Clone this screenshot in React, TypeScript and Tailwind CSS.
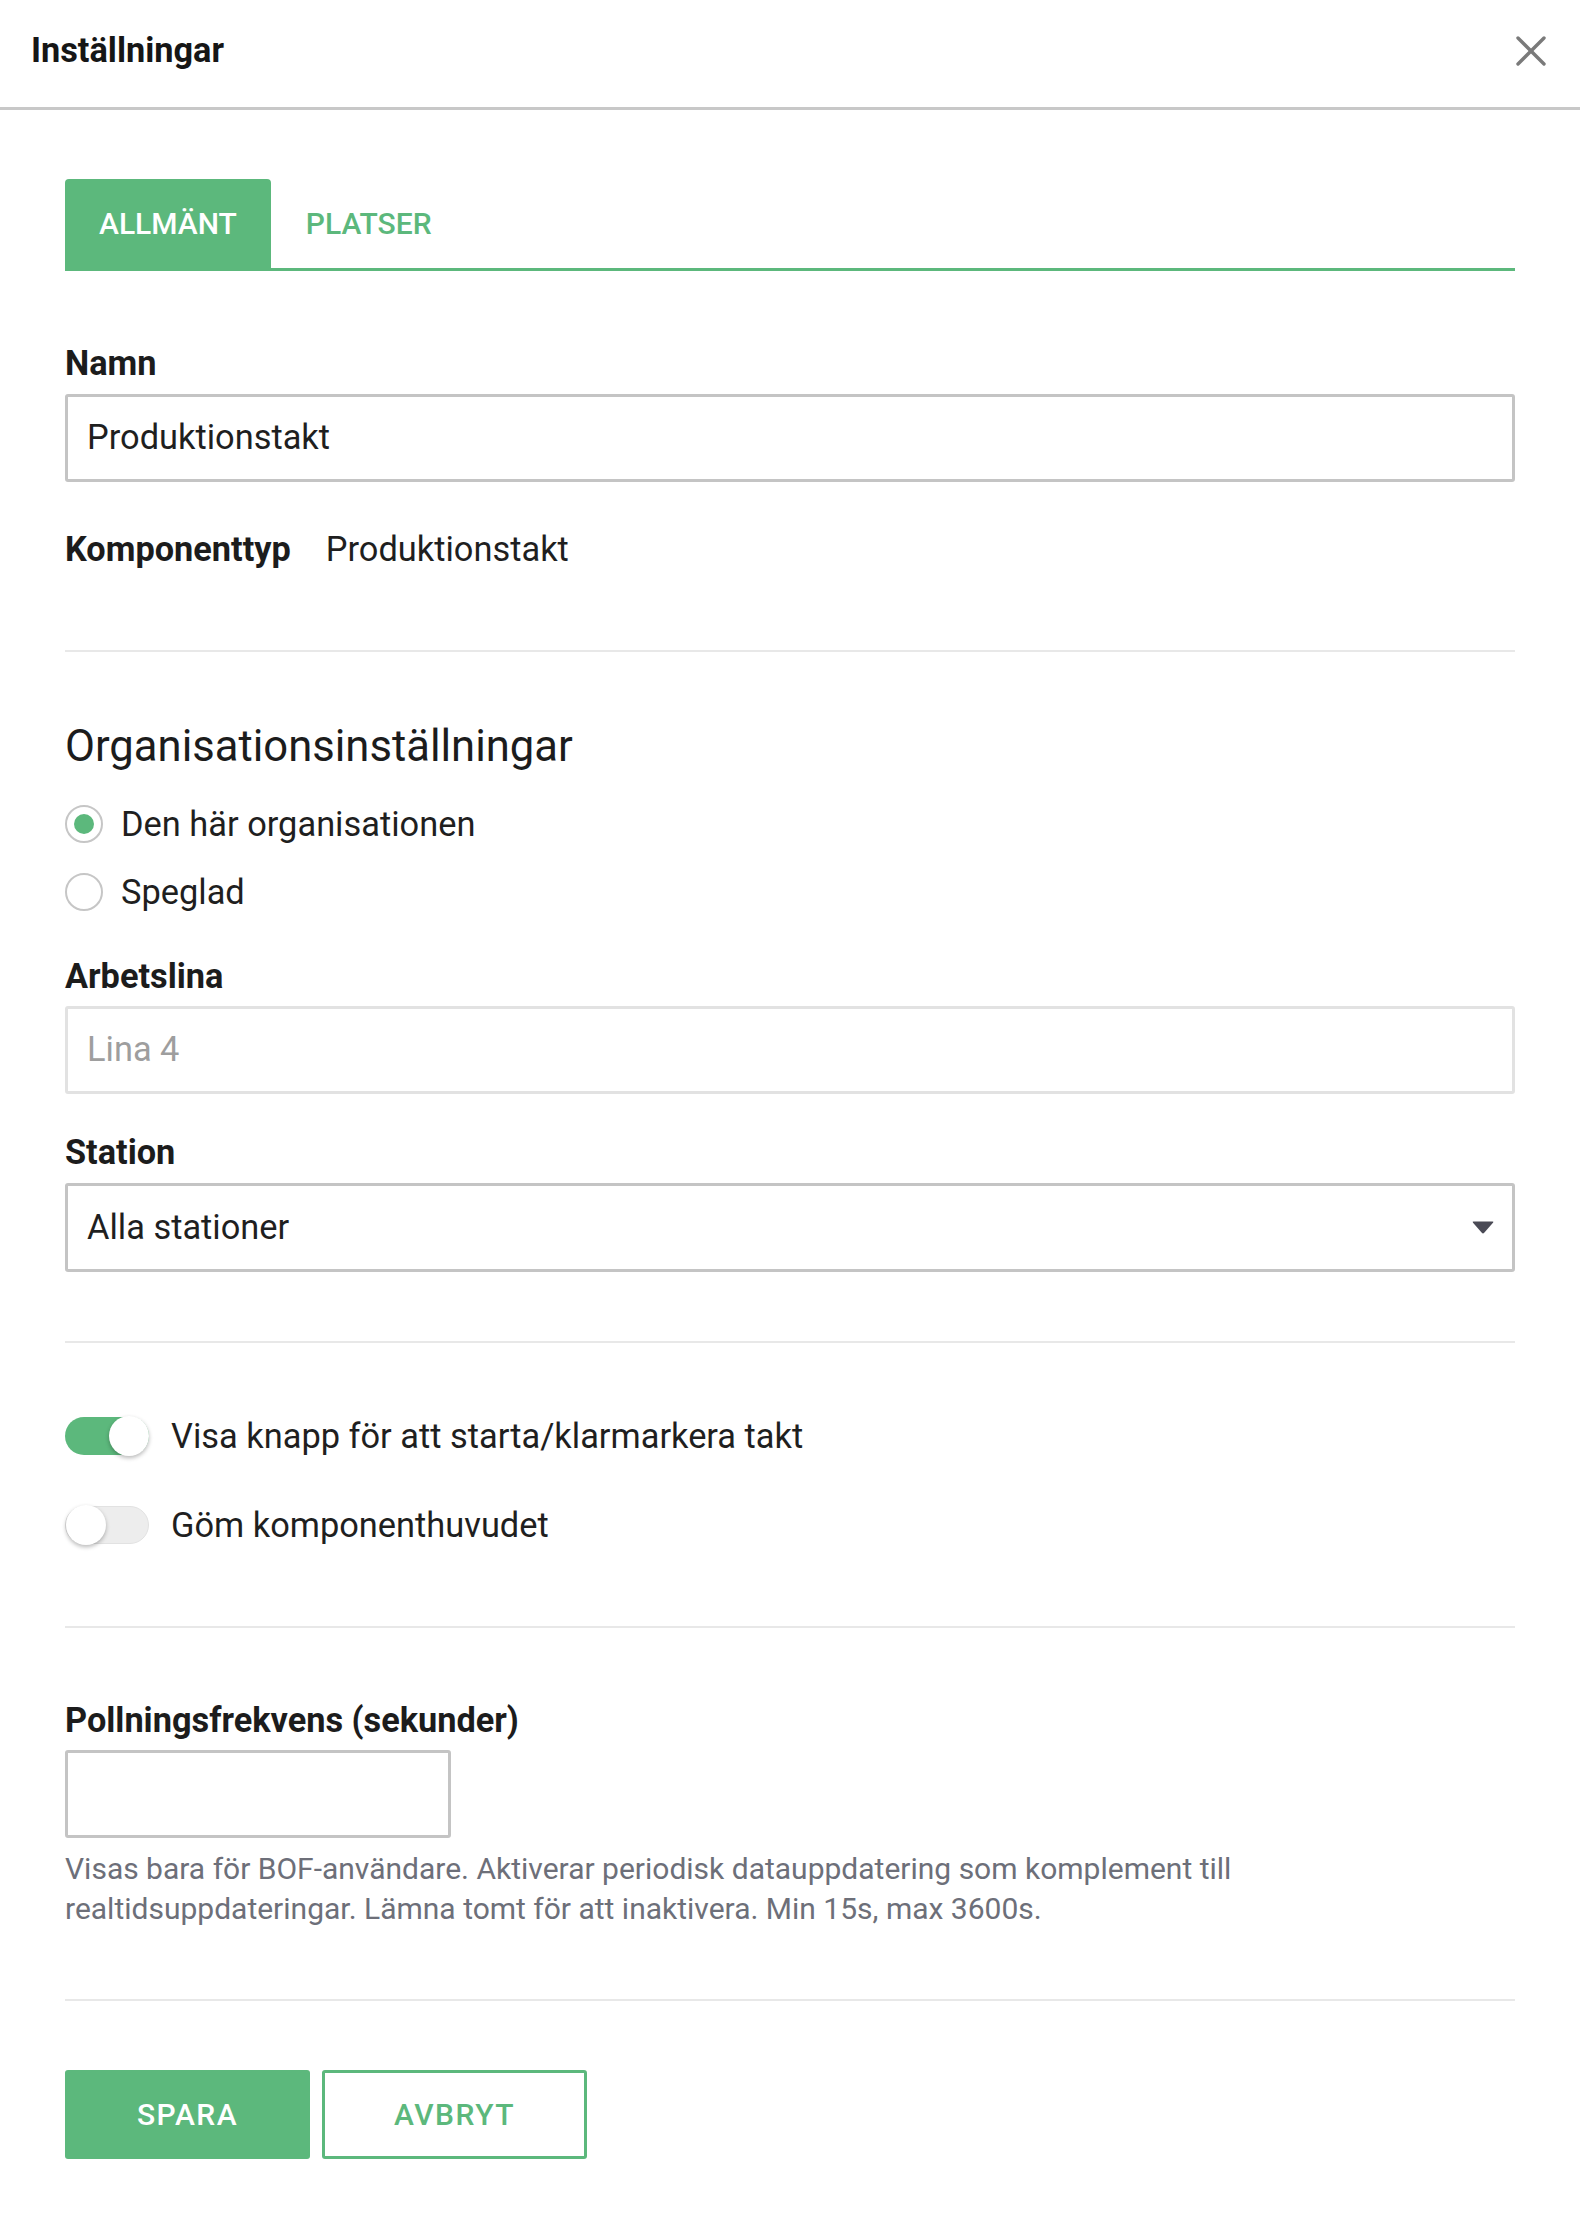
import React from "react";

function Label({ children, className = "" }: { children: React.ReactNode; className?: string }) {
  return <div className={`text-[34.3px] font-bold leading-[40px] text-[#1c1c1c] ${className}`}>{children}</div>;
}

function Divider({ className = "" }: { className?: string }) {
  return <div className={`h-[2px] bg-[#e8e8e8] ${className}`} />;
}

function Radio({ checked, label }: { checked: boolean; label: string }) {
  return (
    <div className="flex h-[48px] items-center gap-[18px]">
      <div className="flex h-[38px] w-[38px] items-center justify-center rounded-full border-[2.5px] border-[#c6c6c6] bg-white">
        {checked && <div className="h-[20px] w-[20px] rounded-full bg-[#5cb87c]" />}
      </div>
      <span className="text-[34.4px] leading-[40px] text-[#1f1f1f]">{label}</span>
    </div>
  );
}

function Toggle({ on, label }: { on: boolean; label: string }) {
  return (
    <div className="flex h-[48px] items-center gap-[22px]">
      <div
        className={`flex h-[38px] w-[84px] items-center rounded-full ${
          on ? "justify-end bg-[#5cb87c]" : "justify-start border border-[#e2e2e2] bg-[#ededed]"
        }`}
      >
        <div className="h-[40px] w-[40px] rounded-full bg-white shadow-[0_2px_4px_rgba(0,0,0,0.28)]" />
      </div>
      <span className="text-[34.4px] leading-[40px] text-[#1f1f1f]">{label}</span>
    </div>
  );
}

export default function App() {
  return (
    <div className="min-h-[2224px] w-[1580px] bg-white font-['Roboto',sans-serif] text-[#1f1f1f]">
      {/* Header */}
      <div className="flex h-[110px] items-center justify-between border-b-[3px] border-[#c8c8c8] pb-[8px] pl-[31px] pr-[34px]">
        <div className="text-[34.3px] font-bold leading-[40px] text-[#161616]">Inställningar</div>
        <svg width="30" height="30" viewBox="0 0 30 30" className="mt-[2px]">
          <line x1="2" y1="2" x2="28" y2="28" stroke="#7a7a7a" strokeWidth="3.4" strokeLinecap="round" />
          <line x1="28" y1="2" x2="2" y2="28" stroke="#7a7a7a" strokeWidth="3.4" strokeLinecap="round" />
        </svg>
      </div>

      <div className="px-[65px] pt-[69px]">
        {/* Tabs */}
        <div className="flex border-b-[3px] border-[#5cb87c]">
          <div className="flex h-[89px] items-center rounded-t-[4px] bg-[#5cb87c] px-[34px] text-[30px] font-medium text-white">
            ALLMÄNT
          </div>
          <div className="flex h-[89px] items-center px-[35px] text-[30px] font-medium text-[#5cb87c]">PLATSER</div>
        </div>

        {/* Namn */}
        <Label className="mt-[72px]">Namn</Label>
        <div className="mt-[11px] flex h-[88px] items-center rounded-[3px] border-[3px] border-[#c4c4c4] px-[19px] text-[34.4px]">
          Produktionstakt
        </div>

        <div className="mt-[47px] flex items-center gap-[35px] leading-[40px]">
          <span className="text-[34.3px] font-bold text-[#1c1c1c]">Komponenttyp</span>
          <span className="text-[34.4px]">Produktionstakt</span>
        </div>

        <Divider className="mt-[81px]" />

        <div className="mt-[70px] text-[43.6px] leading-[50px] text-[#1c1c1c]">Organisationsinställningar</div>

        <div className="mt-[28px] flex flex-col gap-[20px]">
          <Radio checked label="Den här organisationen" />
          <Radio checked={false} label="Speglad" />
        </div>

        <Label className="mt-[40px]">Arbetslina</Label>
        <div className="mt-[10px] flex h-[88px] items-center rounded-[3px] border-[3px] border-[#e2e2e2] px-[19px] text-[34.4px] text-[#9e9e9e]">
          Lina 4
        </div>

        <Label className="mt-[38px]">Station</Label>
        <div className="mt-[11px] flex h-[89px] items-center justify-between rounded-[3px] border-[3px] border-[#c4c4c4] pl-[19px] pr-[18px] text-[34.4px]">
          <span>Alla stationer</span>
          <svg width="22" height="13" viewBox="0 0 22 13">
            <path d="M1.5 0.5 H20.5 Q22 0.5 21 1.8 L12.2 11.8 Q11 13 9.8 11.8 L1 1.8 Q0 0.5 1.5 0.5 Z" fill="#4a4a55" />
          </svg>
        </div>

        <Divider className="mt-[69px]" />

        <div className="mt-[69px] flex flex-col gap-[41px]">
          <Toggle on label="Visa knapp för att starta/klarmarkera takt" />
          <Toggle on={false} label="Göm komponenthuvudet" />
        </div>

        <Divider className="mt-[77px]" />

        <Label className="mt-[72px]">Pollningsfrekvens (sekunder)</Label>
        <div className="mt-[10px] h-[88px] w-[386px] rounded-[3px] border-[3px] border-[#c4c4c4]" />
        <p className="mt-[11px] max-w-[1260px] text-[30px] leading-[40px] text-[#6d6f79]">
          Visas bara för BOF-användare. Aktiverar periodisk datauppdatering som komplement till realtidsuppdateringar.
          Lämna tomt för att inaktivera. Min 15s, max 3600s.
        </p>

        <Divider className="mt-[70px]" />

        <div className="mt-[69px] flex gap-[12px]">
          <button className="flex h-[89px] w-[245px] items-center justify-center rounded-[3px] bg-[#5cb87c] text-[30px] font-medium tracking-[1.5px] text-white">
            SPARA
          </button>
          <button className="flex h-[89px] w-[265px] items-center justify-center rounded-[3px] border-[3px] border-[#5cb87c] bg-white text-[30px] font-medium tracking-[1.5px] text-[#5cb87c]">
            AVBRYT
          </button>
        </div>
      </div>
    </div>
  );
}
